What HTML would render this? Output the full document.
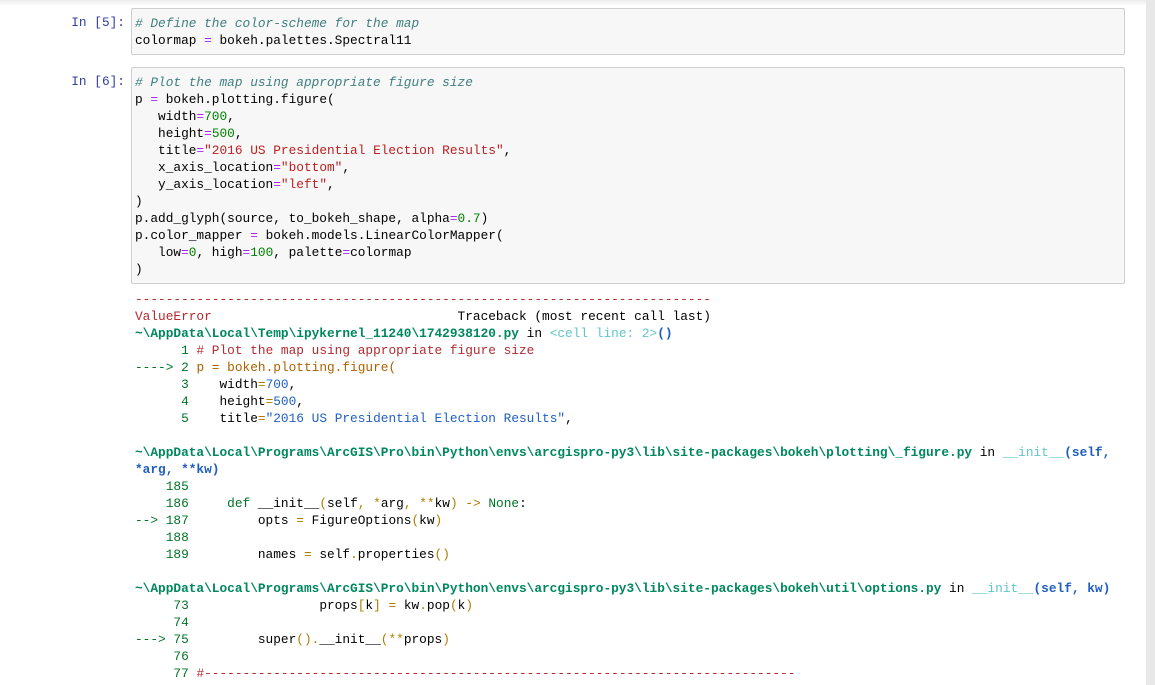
<!DOCTYPE html>
<html><head><meta charset="utf-8"><style>
body{margin:0;width:1155px;height:685px;background:#fff;position:relative;overflow:hidden;font-family:"Liberation Mono",monospace;}
.sb{position:absolute;left:1146px;top:0;width:9px;height:685px;background:#e8e8e8}
.shadow{position:absolute;left:0;top:0;width:1146px;height:6px;background:linear-gradient(#ececec,#fff)}
.box{position:absolute;left:131px;width:992px;background:#f7f7f7;border:1px solid #cfcfcf;border-radius:2px}
pre{position:absolute;margin:0;font-family:"Liberation Mono",monospace;font-size:12.8px;line-height:17px;color:#000;white-space:pre}
.pr{position:absolute;width:125px;text-align:right;left:0;font-size:12.8px;color:#303f9f;font-family:"Liberation Mono",monospace}
.c{color:#408080;font-style:italic}.o{color:#aa22ff}.n{color:#008000}.s{color:#ba2121}
.r{color:#b22b31}.g{color:#007427}.gb{color:#00875f;font-weight:bold}.cy{color:#60c6c8}.b{color:#2060c0}.bb{color:#1f5fc0;font-weight:bold}.y{color:#af5f00}.ye{color:#b07d00}.bl{color:#1f4fb0}
</style></head><body>
<div class="shadow"></div><div class="sb"></div>
<div class="pr" style="top:15px">In [5]:</div>
<div class="box" style="top:8px;height:45px"></div>
<pre style="left:135px;top:15px"><span class="c"># Define the color-scheme for the map</span>
colormap <span class="o">=</span> bokeh.palettes.Spectral11</pre>
<div class="pr" style="top:74px">In [6]:</div>
<div class="box" style="top:67px;height:215px"></div>
<pre style="left:135px;top:74px"><span class="c"># Plot the map using appropriate figure size</span>
p <span class="o">=</span> bokeh.plotting.figure(
   width<span class="o">=</span><span class="n">700</span>,
   height<span class="o">=</span><span class="n">500</span>,
   title<span class="o">=</span><span class="s">"2016 US Presidential Election Results"</span>,
   x_axis_location<span class="o">=</span><span class="s">"bottom"</span>,
   y_axis_location<span class="o">=</span><span class="s">"left"</span>,
)
p.add_glyph(source, to_bokeh_shape, alpha<span class="o">=</span><span class="n">0.7</span>)
p.color_mapper <span class="o">=</span> bokeh.models.LinearColorMapper(
   low<span class="o">=</span><span class="n">0</span>, high<span class="o">=</span><span class="n">100</span>, palette<span class="o">=</span>colormap
)</pre>
<pre style="left:135px;top:291px"><span class="r">---------------------------------------------------------------------------</span>
<span class="r">ValueError</span>                                Traceback (most recent call last)
<span class="gb">~\AppData\Local\Temp\ipykernel_11240\1742938120.py</span> in <span class="cy">&lt;cell line: 2&gt;</span><span class="bb">()</span>
<span class="g">      1</span> <span class="r"># Plot the map using appropriate figure size</span>
<span class="g">----&gt; 2</span> <span class="y">p = bokeh.plotting.figure(</span>
<span class="g">      3</span>    width<span class="ye">=</span><span class="b">700</span>,
<span class="g">      4</span>    height<span class="ye">=</span><span class="b">500</span>,
<span class="g">      5</span>    title<span class="ye">=</span><span class="b">"2016 US Presidential Election Results"</span>,

<span class="gb">~\AppData\Local\Programs\ArcGIS\Pro\bin\Python\envs\arcgispro-py3\lib\site-packages\bokeh\plotting\_figure.py</span> in <span class="cy">__init__</span><span class="bb">(self,</span>
<span class="bb">*arg, **kw)</span>
<span class="g">    185</span>
<span class="g">    186</span>     <span class="g">def</span> __init__<span class="ye">(</span>self<span class="ye">,</span> <span class="ye">*</span>arg<span class="ye">,</span> <span class="ye">**</span>kw<span class="ye">)</span> <span class="ye">-&gt;</span> <span class="g">None</span>:
<span class="g">--&gt; 187</span>         opts <span class="ye">=</span> FigureOptions<span class="ye">(</span>kw<span class="ye">)</span>
<span class="g">    188</span>
<span class="g">    189</span>         names <span class="ye">=</span> self<span class="ye">.</span>properties<span class="ye">()</span>

<span class="gb">~\AppData\Local\Programs\ArcGIS\Pro\bin\Python\envs\arcgispro-py3\lib\site-packages\bokeh\util\options.py</span> in <span class="cy">__init__</span><span class="bb">(self, kw)</span>
<span class="g">     73</span>                 props<span class="ye">[</span>k<span class="ye">]</span> <span class="ye">=</span> kw<span class="ye">.</span>pop<span class="ye">(</span>k<span class="ye">)</span>
<span class="g">     74</span>
<span class="g">---&gt; 75</span>         super<span class="ye">().</span>__init__<span class="ye">(**</span>props<span class="ye">)</span>
<span class="g">     76</span>
<span class="g">     77</span> <span class="r">#-----------------------------------------------------------------------------</span></pre>
</body></html>
